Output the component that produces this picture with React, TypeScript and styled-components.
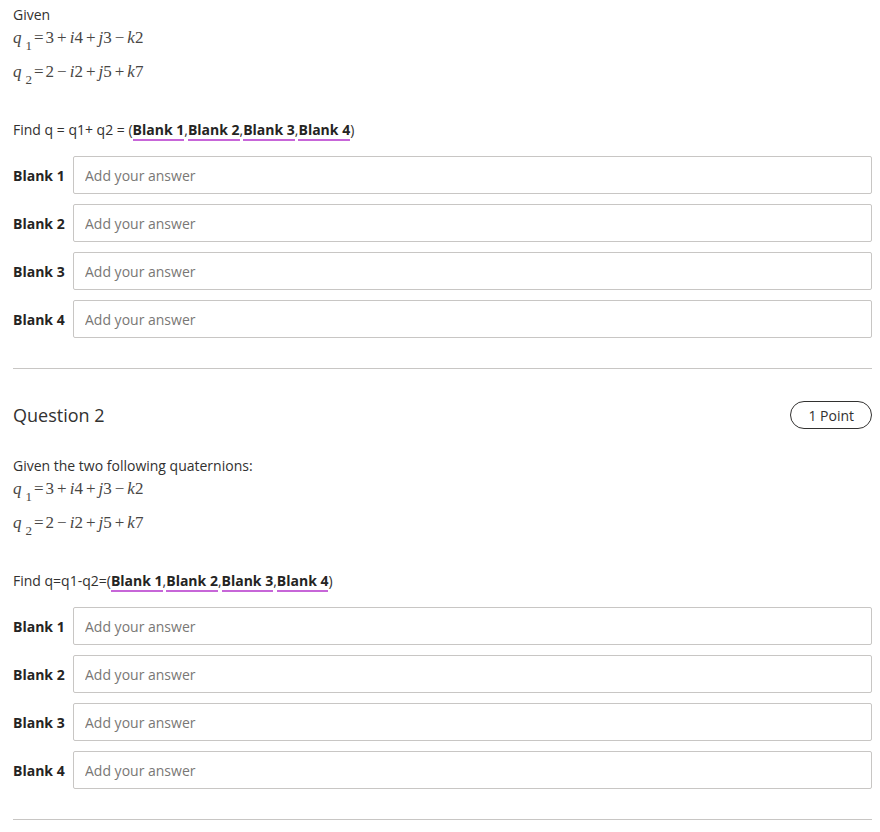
import { Fragment } from "react";
import styled, { createGlobalStyle, css } from "styled-components";

const GlobalStyle = createGlobalStyle`
  body {
    margin: 0;
    background: #ffffff;
    font-family: "Open Sans", "Noto Sans", sans-serif;
    color: #323130;
  }
`;

const Page = styled.div`
  width: 859px;
  padding: 5px 8px 0 13px;
`;

const Section = styled.section`
  display: flex;
  flex-direction: column;
`;

const Divider = styled.hr`
  border: 0;
  height: 1px;
  background: #c8c6c4;
  margin: 30px 0 0 0;
`;

const Header = styled.div`
  display: flex;
  align-items: center;
  justify-content: space-between;
  height: 28px;
  margin: 32px 0 27px 0;
`;

const QuestionTitle = styled.div`
  font-size: 18px;
  color: #323130;
`;

const PointPill = styled.div`
  box-sizing: border-box;
  height: 28px;
  padding: 0 17px;
  border: 1px solid #323130;
  border-radius: 14px;
  display: flex;
  align-items: center;
  font-size: 14px;
  font-weight: 500;
  color: #323130;
`;

const Text = styled.div`
  font-size: 14px;
  line-height: 20px;
  color: #323130;
`;

const MathLine = styled.div<{ $last?: boolean }>(
  (props) => css`
    height: 26px;
    line-height: 26px;
    margin-bottom: ${props.$last ? "35px" : "8px"};
    font-family: "Liberation Serif", "Times New Roman", serif;
    font-size: 17px;
    color: #484644;
    white-space: nowrap;
  `
);

const Var = styled.span`
  font-style: italic;
`;

const Sub = styled.span`
  font-size: 13px;
  position: relative;
  top: 7px;
  margin-left: 4px;
`;

const Op = styled.span<{ $rel?: boolean }>(
  (props) => css`
    margin: 0 ${props.$rel ? "2px" : "3px"};
  `
);

const Blank = styled.span`
  font-weight: 700;
  color: #252423;
  border-bottom: 2px solid #c766d8;
`;

const FindLine = styled(Text)`
  margin-bottom: 16px;
`;

const Rows = styled.div`
  display: flex;
  flex-direction: column;
  gap: 10px;
`;

const Row = styled.label`
  display: grid;
  grid-template-columns: 60px 1fr;
  align-items: center;
`;

const RowLabel = styled.span`
  font-size: 14px;
  font-weight: 700;
  color: #252423;
`;

const AnswerInput = styled.input`
  box-sizing: border-box;
  height: 38px;
  width: 100%;
  padding: 0 11px;
  border: 1px solid #c8c6c4;
  border-radius: 2px;
  font-family: "Open Sans", "Noto Sans", sans-serif;
  font-size: 14px;
  color: #323130;
  outline: none;
  &::placeholder {
    color: #797775;
  }
`;

type Term = { sign: string; unit: string; value: string };

const Equation = ({ index, first, terms, last }: { index: number; first: string; terms: Term[]; last?: boolean }) => (
  <MathLine $last={last}>
    <Var>q</Var>
    <Sub>{index}</Sub>
    <Op $rel>=</Op>
    {first}
    {terms.map((t, i) => (
      <Fragment key={i}>
        <Op>{t.sign}</Op>
        <Var>{t.unit}</Var>
        {t.value}
      </Fragment>
    ))}
  </MathLine>
);

const q1Terms: Term[] = [
  { sign: "+", unit: "i", value: "4" },
  { sign: "+", unit: "j", value: "3" },
  { sign: "−", unit: "k", value: "2" },
];

const q2Terms: Term[] = [
  { sign: "−", unit: "i", value: "2" },
  { sign: "+", unit: "j", value: "5" },
  { sign: "+", unit: "k", value: "7" },
];

const blanks = [1, 2, 3, 4];

const Question = ({ intro, find, title }: { intro: string; find: string; title?: string }) => (
  <Section>
    {title && (
      <Header>
        <QuestionTitle>{title}</QuestionTitle>
        <PointPill>1 Point</PointPill>
      </Header>
    )}
    <Text>{intro}</Text>
    <Equation index={1} first="3" terms={q1Terms} />
    <Equation index={2} first="2" terms={q2Terms} last />
    <FindLine>
      {find}(
      {blanks.map((n, i) => (
        <Fragment key={n}>
          <Blank>Blank {n}</Blank>
          {i < blanks.length - 1 ? "," : ""}
        </Fragment>
      ))}
      )
    </FindLine>
    <Rows>
      {blanks.map((n) => (
        <Row key={n}>
          <RowLabel>Blank {n}</RowLabel>
          <AnswerInput placeholder="Add your answer" />
        </Row>
      ))}
    </Rows>
    <Divider />
  </Section>
);

export default function App() {
  return (
    <>
      <GlobalStyle />
      <Page>
        <Question intro="Given" find="Find q = q1+ q2 = " />
        <Question title="Question 2" intro="Given the two following quaternions:" find="Find q=q1-q2=" />
      </Page>
    </>
  );
}
